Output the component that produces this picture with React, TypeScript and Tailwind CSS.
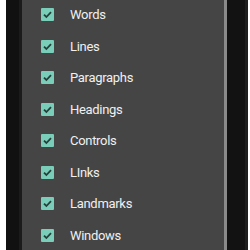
import React from "react";

const items = ["Words", "Lines", "Paragraphs", "Headings", "Controls", "LInks", "Landmarks", "Windows"];

function Check() {
  return (
    <span className="flex h-[13px] w-[13px] shrink-0 items-center justify-center rounded-[1px] bg-[#79cdb9]">
      <svg viewBox="0 0 13 13" className="h-[13px] w-[13px]">
        <path d="M3 6.6 L5.4 9 L10 4.2" fill="none" stroke="#24413b" strokeWidth="1.8" />
      </svg>
    </span>
  );
}

export default function App() {
  return (
    <div className="flex h-[250px] w-[250px] overflow-hidden bg-white font-['Roboto',sans-serif]">
      <div className="w-[6px] shrink-0 bg-white" />
      <div className="w-[13px] shrink-0 bg-[#111111]" />
      <div className="w-[3px] shrink-0 bg-[#1b1b1b]" />
      <div className="flex w-[202px] shrink-0 flex-col bg-[#454545] pl-[19px] -mt-[1px]">
        {items.map((label) => (
          <div key={label} className="flex h-[31.5px] shrink-0 items-center">
            <Check />
            <span className="ml-[16px] text-[13px] leading-none tracking-[-0.3px] text-[#f0f0f0]">{label}</span>
          </div>
        ))}
      </div>
      <div className="w-[3px] shrink-0 bg-[#8a8a8a]" />
      <div className="w-[18px] shrink-0 bg-[#121212]" />
      <div className="w-[3px] shrink-0 bg-[#1e1e1e]" />
      <div className="w-[2px] shrink-0 bg-white" />
    </div>
  );
}
